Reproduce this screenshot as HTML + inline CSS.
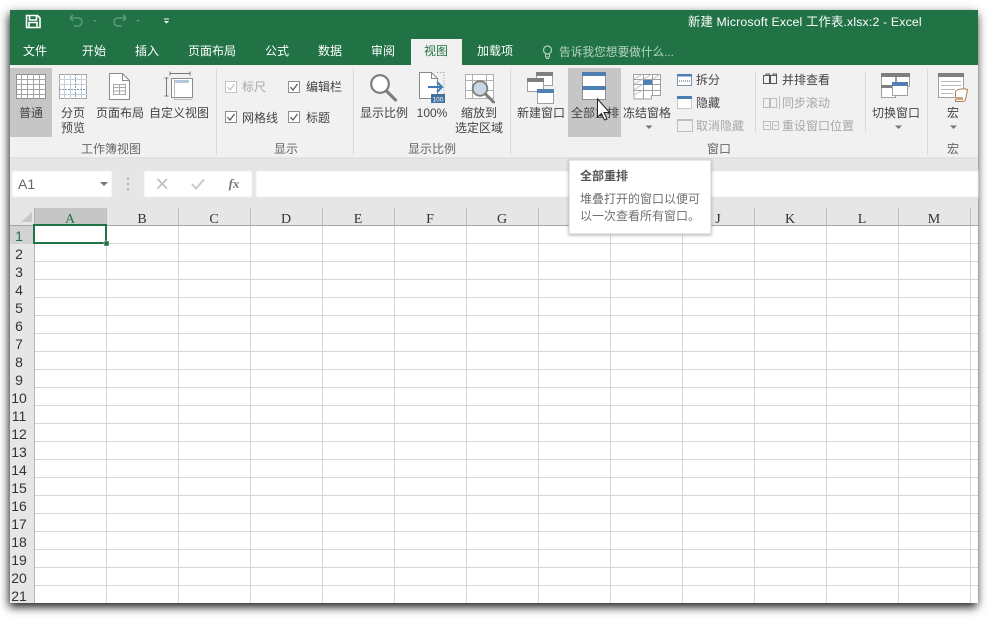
<!DOCTYPE html>
<html><head><meta charset="utf-8"><style>
html,body{margin:0;padding:0;background:#fff;width:988px;height:619px;overflow:hidden}
#win{position:absolute;left:10px;top:10px;width:968px;height:593px;box-shadow:-1px 4px 9px rgba(0,0,0,.9)}
svg{position:absolute;left:0;top:0;filter:blur(.35px)}
text{font-family:"Liberation Sans","Noto Sans CJK SC",sans-serif;font-size:12px;fill:#444}
.m{text-anchor:middle}
.w{fill:#fff}
.d{fill:#a8a8a8}
.h{font-family:"Liberation Serif","Noto Sans CJK SC",serif;font-size:14px;fill:#333;text-anchor:middle}
.r{font-family:"Liberation Sans",sans-serif;font-size:14px;fill:#333;text-anchor:middle}
</style></head><body>
<div id="win"></div>
<svg width="988" height="619" viewBox="0 0 988 619" xmlns="http://www.w3.org/2000/svg">
<defs>
<pattern id="gv" x="34" y="0" width="72" height="619" patternUnits="userSpaceOnUse"><rect x="0" width="1" height="619" fill="#d6d6d6"/></pattern>
<pattern id="gh" x="0" y="225" width="988" height="18" patternUnits="userSpaceOnUse"><rect y="0" width="988" height="1" fill="#d6d6d6"/></pattern>
<filter id="ts" x="-20%" y="-20%" width="140%" height="140%"><feDropShadow dx="0" dy="1" stdDeviation="1.5" flood-color="#000" flood-opacity=".28"/></filter>
</defs>

<!-- backgrounds -->
<rect x="10" y="10" width="968" height="593" fill="#fff"/>
<rect x="10" y="10" width="968" height="55" fill="#217346"/>
<rect x="10" y="65" width="968" height="93" fill="#f1f1f1"/>
<rect x="10" y="158" width="968" height="50" fill="#e6e6e6"/>
<rect x="10" y="157.500" width="968" height="1" fill="#d8d8d8"/>

<!-- title bar -->
<path d="M26.500 15.500h11l2.500 2.500v9.500h-13.500zM29.500 15.500v4.500h7v-4.500M29 27.500v-5h8v5" fill="none" stroke="#fff" stroke-width="1.600"/>
<path d="M70 18h8a4 4 0 0 1 0 8h-4M70 18l3-3M70 18l3 3" fill="none" stroke="#5c9a79" stroke-width="1.600"/>
<path d="M93 20h4l-2 2z" fill="#5c9a79"/>
<path d="M126 18h-8a4 4 0 0 0 0 8h4M126 18l-3-3M126 18l-3 3" fill="none" stroke="#5c9a79" stroke-width="1.600"/>
<path d="M136 20h4l-2 2z" fill="#5c9a79"/>
<path d="M164 18.500h5v1h-5zM164 21h5l-2.500 2.500z" fill="#fff"/>
<text x="688" y="26" class="w" style="font-size:12.300px;letter-spacing:.17px">新建 Microsoft Excel 工作表.xlsx:2 - Excel</text>

<!-- tabs -->
<rect x="411" y="39" width="51" height="26" fill="#f1f1f1"/>
<g class="w">
<text x="35" y="55" class="m w">文件</text>
<text x="94" y="55" class="m w">开始</text>
<text x="147" y="55" class="m w">插入</text>
<text x="212" y="55" class="m w">页面布局</text>
<text x="277" y="55" class="m w">公式</text>
<text x="330" y="55" class="m w">数据</text>
<text x="383" y="55" class="m w">审阅</text>
<text x="495" y="55" class="m w">加载项</text>
</g>
<text x="436" y="55" class="m" style="fill:#217346">视图</text>
<circle cx="547.500" cy="50" r="4" fill="none" stroke="#b7d3c3" stroke-width="1.200"/>
<path d="M545.500 54v3h4v-3M546 58.500h3" fill="none" stroke="#b7d3c3"/>
<text x="559" y="56" style="fill:#b7d3c3;font-size:11.700px">告诉我您想要做什么...</text>

<!-- highlights -->
<rect x="10" y="68" width="42" height="69" fill="#c6c6c6"/>
<rect x="568" y="68" width="53" height="69" fill="#c6c6c6"/>

<!-- separators -->
<g fill="#d8d8d8">
<rect x="216" y="69" width="1" height="86"/>
<rect x="353" y="69" width="1" height="86"/>
<rect x="510" y="69" width="1" height="86"/>
<rect x="755" y="72" width="1" height="60"/>
<rect x="865" y="72" width="1" height="60"/>
<rect x="927" y="69" width="1" height="86"/>
</g>

<!-- normal view -->
<g>
<rect x="16.500" y="74.500" width="29" height="24" fill="#fff" stroke="#8f8f8f"/>
<path d="M16 79.500h30M16 84.500h30M16 89.500h30M16 94.500h30M21.500 74v25M27.500 74v25M33.500 74v25M39.500 74v25" stroke="#a4a4a4" stroke-width="1" fill="none"/>
</g>
<!-- page break preview -->
<g>
<rect x="59.500" y="74.500" width="27" height="24" fill="#fff" stroke="#a4a4a4"/>
<path d="M59 79.500h28M59 84.500h28M59 94.500h28M64.500 74v25M70.500 74v25M81.500 74v25" stroke="#c2d0de" fill="none"/>
<path d="M59 89.500h28M75.500 74v25" stroke="#7d9ab9" stroke-dasharray="2 1" fill="none"/>
</g>
<!-- page layout -->
<g fill="none" stroke="#8a8a8a">
<path d="M109.500 73.500h13l7 7v19h-20z" fill="#fff"/>
<path d="M122.500 73.500v7h7"/>
<path d="M113.500 84.500h12v10h-12zM113.500 87.500h12M113.500 91h12M119.500 84v11" stroke="#a8a8a8"/>
</g>
<!-- custom view -->
<g fill="none" stroke="#8a8a8a">
<path d="M170 73.500h20M170 71.500v4M190 71.500v4M166.500 78v18M164.500 78h4M164.500 96h4" stroke="#777"/>
<rect x="171.500" y="78.500" width="21" height="19" fill="#fff"/>
<rect x="174" y="80" width="15" height="3" fill="#b4c7dc" stroke="none"/>
<path d="M174.500 79.500v20h18" stroke="#bbb"/>
</g>

<!-- checkboxes -->
<g fill="#fff">
<rect x="225.500" y="81.500" width="11" height="11" stroke="#c4c4c4"/>
<rect x="288.500" y="81.500" width="11" height="11" stroke="#8e8e8e"/>
<rect x="225.500" y="111.500" width="11" height="11" stroke="#8e8e8e"/>
<rect x="288.500" y="111.500" width="11" height="11" stroke="#8e8e8e"/>
</g>
<g fill="none" stroke-width="1.200">
<path d="M227.500 87l2.500 3 4.500-6" stroke="#c4c4c4"/>
<path d="M290.500 87l2.500 3 4.500-6" stroke="#555"/>
<path d="M227.500 117l2.500 3 4.500-6" stroke="#555"/>
<path d="M290.500 117l2.500 3 4.500-6" stroke="#555"/>
</g>

<!-- zoom icon -->
<circle cx="380" cy="84" r="8.800" fill="#fff" stroke="#7d7d7d" stroke-width="2.200"/>
<path d="M386.500 91l9 9" stroke="#7d7d7d" stroke-width="3.200" stroke-linecap="round"/>
<!-- 100% -->
<path d="M419.500 72.500h12l6 6v20h-18z" fill="#fff" stroke="#8a8a8a"/>
<path d="M431.500 72.500v6h6" fill="none" stroke="#8a8a8a"/>
<path d="M437 72.500h7v22" fill="none" stroke="#aaa" stroke-dasharray="1.500 1.500"/>
<path d="M428 87h14M437 82l5 5-5 5" fill="none" stroke="#3d79b6" stroke-width="2"/>
<rect x="431" y="94" width="14" height="9" fill="#43719f"/>
<text x="438" y="101.500" class="m w" style="font-size:6.500px;font-family:'Liberation Sans',sans-serif">100</text>
<!-- zoom selection -->
<path d="M465.500 74.500h28v24h-28zM465 80.500h29M465 90.500h29M472.500 74v24M486.500 74v24" fill="#fff" stroke="#b0b0b0"/>
<circle cx="480" cy="88.500" r="7.300" fill="#c8d8e6" stroke="#7d7d7d" stroke-width="1.800"/>
<path d="M485.500 94l8 8" stroke="#7d7d7d" stroke-width="3" stroke-linecap="round"/>

<!-- new window -->
<g stroke="#a0a0a0" fill="#fff">
<rect x="536.500" y="72.500" width="16" height="13"/>
<rect x="527.500" y="78.500" width="16" height="13"/>
<rect x="537.500" y="89.500" width="16" height="14"/>
</g>
<rect x="536" y="72" width="17" height="4" fill="#7f7f7f"/>
<rect x="527" y="78" width="17" height="4" fill="#7f7f7f"/>
<rect x="537" y="89" width="17" height="4" fill="#4f81b5"/>
<!-- arrange all -->
<rect x="582.500" y="72.500" width="23" height="27" fill="#fff" stroke="#8f8f8f"/>
<rect x="582" y="72" width="24" height="4" fill="#4f7fb2"/>
<rect x="582" y="86" width="24" height="4" fill="#4f7fb2"/>
<!-- freeze panes -->
<g fill="none" stroke="#a0a0a0">
<path d="M633.500 74.500h27v21h-9v3.500h-17.500z" fill="#fff"/>
<path d="M633 79.500h28M633 84.500h28M633 90.500h28M643.500 74v25M652.500 74v22"/>
<path d="M634 79l9-5M634 84l9-5M634 90l9-6M634 95l9-5M644 79l8-5M653 79l7-5" stroke="#bdbdbd"/>
</g>
<rect x="643" y="80" width="9" height="5" fill="#4f81b5"/>
<path d="M645.500 125.500h7l-3.500 3.500z" fill="#777"/>
<!-- split / hide / unhide -->
<rect x="677.500" y="74.500" width="14" height="11" fill="#fff" stroke="#7f96ae"/>
<rect x="677" y="74" width="15" height="2.500" fill="#4f7fb2"/>
<path d="M679 81h11" stroke="#555" stroke-dasharray="1 1"/>
<rect x="677.500" y="97.500" width="14" height="11" fill="#fff" stroke="#999" stroke-dasharray="1 1"/>
<rect x="677" y="96" width="15" height="3" fill="#4f7fb2"/>
<rect x="677.500" y="119.500" width="15" height="12" fill="none" stroke="#bfbfbf"/>
<rect x="677" y="119" width="16" height="2" fill="#bfbfbf"/>
<!-- side by side etc -->
<path d="M763.500 75.500h6v8h-6zM770.500 75.500h6v8h-6zM766 75v-1h3.500v1M773 75v-1h3.500v1" fill="none" stroke="#555"/>
<path d="M763.500 98.500h6v9h-6zM770.500 98.500h6v9h-6zM779.500 96v13" fill="none" stroke="#bdbdbd"/>
<path d="M763.500 121.500h7v8h-7zM772.500 121.500h6v8h-6zM765 125.500h4M774 125.500h3" fill="none" stroke="#bdbdbd"/>
<!-- switch windows -->
<g fill="#fff" stroke="#a0a0a0">
<rect x="881.500" y="73.500" width="14" height="24"/>
<rect x="896.500" y="73.500" width="13" height="13"/>
<rect x="892.500" y="82.500" width="15" height="13"/>
</g>
<rect x="881" y="73" width="15" height="4" fill="#7f7f7f"/>
<rect x="896" y="73" width="14" height="4" fill="#7f7f7f"/>
<rect x="881" y="85" width="11" height="3" fill="#7f7f7f"/>
<rect x="892" y="82" width="16" height="4" fill="#4f81b5"/>
<path d="M895 125.500h7l-3.500 3.500z" fill="#777"/>
<!-- macro -->
<rect x="938.500" y="73.500" width="25" height="24" fill="#fff" stroke="#a0a0a0"/>
<rect x="938" y="73" width="26" height="4" fill="#7f7f7f"/>
<path d="M941 81.500h20M941 85.500h20M941 89.500h14M941 93.500h12" stroke="#b8b8b8"/>
<path d="M955.500 91.500c2-3 9-3 12-2l-2 10c0 2-3 2-5 2h-5z" fill="#fff" stroke="#a87f55"/>
<rect x="955" y="97" width="8" height="3" fill="#c9a988"/>
<path d="M950 125.500h7l-3.500 3.500z" fill="#777"/>

<!-- ribbon text -->
<text x="31" y="117" class="m">普通</text>
<text x="73" y="117" class="m">分页</text>
<text x="73" y="132" class="m">预览</text>
<text x="120" y="117" class="m">页面布局</text>
<text x="179" y="117" class="m">自定义视图</text>
<text x="111" y="153" class="m" style="fill:#666">工作簿视图</text>
<text x="242" y="91" class="d">标尺</text>
<text x="306" y="91">编辑栏</text>
<text x="242" y="122">网格线</text>
<text x="306" y="122">标题</text>
<text x="286" y="153" class="m" style="fill:#666">显示</text>
<text x="384" y="117" class="m">显示比例</text>
<text x="432" y="117" class="m">100%</text>
<text x="479" y="117" class="m">缩放到</text>
<text x="479" y="132" class="m">选定区域</text>
<text x="432" y="153" class="m" style="fill:#666">显示比例</text>
<text x="541" y="117" class="m">新建窗口</text>
<text x="595" y="117" class="m">全部重排</text>
<text x="647" y="117" class="m">冻结窗格</text>
<text x="696" y="84">拆分</text>
<text x="696" y="107">隐藏</text>
<text x="696" y="130" class="d">取消隐藏</text>
<text x="782" y="84">并排查看</text>
<text x="782" y="107" class="d">同步滚动</text>
<text x="782" y="130" class="d">重设窗口位置</text>
<text x="896" y="117" class="m">切换窗口</text>
<text x="953" y="117" class="m">宏</text>
<text x="719" y="153" class="m" style="fill:#666">窗口</text>
<text x="953" y="153" class="m" style="fill:#666">宏</text>

<!-- formula bar -->
<rect x="12" y="171" width="100" height="26" fill="#fff" stroke="#ececec"/>
<text x="18" y="189" style="font-size:14px;fill:#666">A1</text>
<path d="M100 182h8l-4 4z" fill="#777"/>
<path d="M127 178h2v2h-2zM127 183h2v2h-2zM127 188h2v2h-2z" fill="#b0b0b0"/>
<rect x="144" y="171" width="108" height="26" fill="#fff" stroke="#ececec"/>
<path d="M157.500 179l9.500 9.500M167 179l-9.500 9.500" stroke="#c0c0c0" stroke-width="1.700" fill="none"/>
<path d="M192 184l4 4.500 8-9" stroke="#c8c8c8" stroke-width="2" fill="none"/>
<text x="234" y="188" class="m" style="font-family:'Liberation Serif',serif;font-style:italic;font-size:13px;font-weight:bold;fill:#777">fx</text>
<rect x="256" y="171" width="722" height="26" fill="#fff" stroke="#ececec"/>

<!-- sheet -->
<rect x="10" y="208" width="968" height="17" fill="#e6e6e6"/>
<rect x="10" y="208" width="24" height="395" fill="#e6e6e6"/>
<rect x="34" y="226" width="944" height="377" fill="#fff"/>
<rect x="34" y="225" width="944" height="378" fill="url(#gh)"/>
<rect x="34" y="225" width="937" height="378" fill="url(#gv)"/>
<rect x="34" y="208" width="72" height="17" fill="#c6c6c6"/>
<rect x="10" y="226" width="24" height="18" fill="#d2d2d2"/>
<path d="M21 222l11-10v10z" fill="#c8c8c8"/>
<g fill="#c0c0c0">
<rect x="106" y="208" width="1" height="17"/><rect x="178" y="208" width="1" height="17"/><rect x="250" y="208" width="1" height="17"/><rect x="322" y="208" width="1" height="17"/><rect x="394" y="208" width="1" height="17"/><rect x="466" y="208" width="1" height="17"/><rect x="538" y="208" width="1" height="17"/><rect x="610" y="208" width="1" height="17"/><rect x="682" y="208" width="1" height="17"/><rect x="754" y="208" width="1" height="17"/><rect x="826" y="208" width="1" height="17"/><rect x="898" y="208" width="1" height="17"/><rect x="970" y="208" width="1" height="17"/>
</g>
<rect x="10" y="225" width="968" height="1" fill="#a6a6a6"/>
<rect x="34" y="208" width="1" height="395" fill="#b4b4b4"/>

<text x="70" y="223" class="h" style="fill:#217346">A</text>
<text x="142" y="223" class="h">B</text>
<text x="214" y="223" class="h">C</text>
<text x="286" y="223" class="h">D</text>
<text x="358" y="223" class="h">E</text>
<text x="430" y="223" class="h">F</text>
<text x="502" y="223" class="h">G</text>
<text x="718" y="223" class="h">J</text>
<text x="790" y="223" class="h">K</text>
<text x="862" y="223" class="h">L</text>
<text x="934" y="223" class="h">M</text>

<g>
<text x="19" y="241" class="r" style="fill:#217346">1</text>
<text x="19" y="259" class="r">2</text>
<text x="19" y="277" class="r">3</text>
<text x="19" y="295" class="r">4</text>
<text x="19" y="313" class="r">5</text>
<text x="19" y="331" class="r">6</text>
<text x="19" y="349" class="r">7</text>
<text x="19" y="367" class="r">8</text>
<text x="19" y="385" class="r">9</text>
<text x="19" y="403" class="r">10</text>
<text x="19" y="421" class="r">11</text>
<text x="19" y="439" class="r">12</text>
<text x="19" y="457" class="r">13</text>
<text x="19" y="475" class="r">14</text>
<text x="19" y="493" class="r">15</text>
<text x="19" y="511" class="r">16</text>
<text x="19" y="529" class="r">17</text>
<text x="19" y="547" class="r">18</text>
<text x="19" y="565" class="r">19</text>
<text x="19" y="583" class="r">20</text>
<text x="19" y="601" class="r">21</text>
</g>

<!-- selection -->
<rect x="34" y="225" width="72" height="18" fill="none" stroke="#217346" stroke-width="2"/>
<rect x="104" y="241" width="5" height="5" fill="#217346" stroke="#fff" stroke-width=".5"/>

<!-- tooltip -->
<rect x="569" y="160" width="142" height="74" fill="#fff" stroke="#cfcfcf" filter="url(#ts)"/>
<text x="580" y="180" style="font-weight:bold;fill:#555">全部重排</text>
<text x="580" y="203" style="fill:#707070">堆叠打开的窗口以便可</text>
<text x="580" y="220" style="fill:#707070">以一次查看所有窗口。</text>

<!-- cursor -->
<path d="M597.500 99v18l4-3.500 3 6.500 2.500-1-3-6.500h5.500z" fill="#fff" stroke="#222" stroke-width="1"/>
</svg>
</body></html>
